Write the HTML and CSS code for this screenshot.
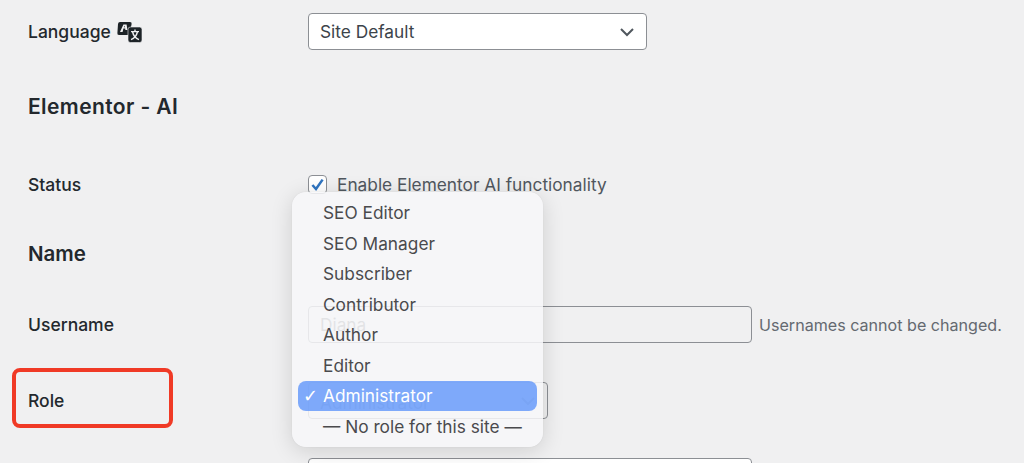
FILE: index.html
```html
<!DOCTYPE html>
<html lang="en">
<head>
<meta charset="utf-8">
<title>Profile</title>
<link rel="stylesheet" href="styles.css">
</head>
<body>
<main class="form">
  <div class="row row-language">
    <div class="label label-icon">Language
      <svg class="lang-icon" width="26" height="22" viewBox="0 0 26 22" aria-hidden="true">
        <path d="M3 1 H13 Q15 1 14.6 3 L12.8 12 Q12.4 14 10.4 14 H2 Q0 14 0.4 12 L1 3 Q1.2 1 3 1 Z" fill="#1d2327"/>
        <path d="M3 11 L6.4 3.4 H9.6 L10.4 9 H8.4 L8.2 7.6 H6.4 L5.6 11 Z M6.9 6.2 H8.1 L7.9 4.8 Z" fill="#f0f0f1" fill-rule="evenodd"/>
        <rect x="11" y="6" width="14" height="15.5" rx="2.5" fill="#1d2327" stroke="#f0f0f1" stroke-width="0.6"/>
        <path d="M18 8.4 V10.4 M14 10.6 H22 M15.6 11 C16.4 14.6 18.8 17.4 22 18.6 M20.4 11 C19.6 14.6 17.2 17.4 14 18.6" fill="none" stroke="#f0f0f1" stroke-width="1.4"/>
      </svg>
    </div>
    <div class="select select-wide"><span>Site Default</span><svg class="chevron" width="16" height="10" viewBox="0 0 16 10" aria-hidden="true"><path d="M2 2 L8 8 L14 2" fill="none" stroke="#50575e" stroke-width="2"/></svg></div>
  </div>

  <h2 class="heading heading-ai">Elementor - AI</h2>

  <div class="row row-status">
    <div class="label">Status</div>
    <div class="check-line">
      <span class="checkbox"><svg width="17" height="17" viewBox="0 0 17 17" aria-hidden="true"><path d="M3.4 9 L7 13 L13.6 3.6" fill="none" stroke="#2f74c0" stroke-width="2.5"/></svg></span>
      <span class="check-text">Enable Elementor AI functionality</span>
    </div>
  </div>

  <h2 class="heading heading-name">Name</h2>

  <div class="row row-username">
    <div class="label">Username</div>
    <div class="field-line">
      <div class="input input-disabled">Diana</div>
      <span class="hint">Usernames cannot be changed.</span>
    </div>
  </div>

  <div class="row row-role">
    <div class="label">Role</div>
    <div class="select select-role"><span>Administrator</span><svg class="chevron" width="16" height="10" viewBox="0 0 16 10" aria-hidden="true"><path d="M2 2 L8 8 L14 2" fill="none" stroke="#50575e" stroke-width="2"/></svg></div>
  </div>

  <div class="row row-next">
    <div class="label"></div>
    <div class="input input-next"></div>
  </div>
</main>

<div class="highlight-box"></div>

<ul class="menu">
  <li class="menu-item">SEO Editor</li>
  <li class="menu-item">SEO Manager</li>
  <li class="menu-item">Subscriber</li>
  <li class="menu-item">Contributor</li>
  <li class="menu-item">Author</li>
  <li class="menu-item">Editor</li>
  <li class="menu-item menu-item-active"><span class="tick">✓</span>Administrator</li>
  <li class="menu-item">— No role for this site —</li>
</ul>
</body>
</html>
```
FILE: styles.css
```css
* { box-sizing: border-box; }
html, body { margin: 0; height: 100%; overflow: hidden; }
body {
  background: #f0f0f1;
  color: #1d2327;
  font-family: Inter, "Liberation Sans", sans-serif;
  font-size: 17.3px;
  position: relative;
}
.form { height: 100vh; overflow: hidden; padding: 13px 0 0 28px; }
.row {
  display: grid;
  grid-template-columns: 280px 1fr;
  align-items: center;
}
.label { font-weight: 500; color: #23282d; font-size: 17.5px; }
.label-icon { display: flex; align-items: center; gap: 6px; }
.lang-icon { margin-top: 1px; }
.heading {
  margin: 0;
  font-size: 20.5px;
  font-weight: 600;
  line-height: 30px;
  color: #23282d;
}
.heading-ai { margin-top: 42px; font-size: 21px; letter-spacing: 0.4px; }
.row-status { margin-top: 50px; height: 24px; }
.heading-name { margin-top: 43px; }
.row-username { margin-top: 37px; }
.row-role { margin-top: 39px; }
.row-next { margin-top: 39px; }

.select, .input {
  height: 37px;
  border: 1px solid #8c8f94;
  border-radius: 4px;
  background: #fff;
  color: #3c434a;
  display: flex;
  align-items: center;
  padding: 0 11px;
}
.select { justify-content: space-between; }
.select-wide { width: 339px; }
.select-role { width: 240px; background: #f0f0f1; }
.select-role span { padding-top: 3px; }
.chevron { flex: none; }
.input { width: 444px; }
.input-disabled { background: #f0f0f1; color: #6f7276; flex: none; }
.input-next { height: 37px; }

.check-line { display: flex; align-items: center; gap: 10px; }
.checkbox {
  width: 19px;
  height: 19px;
  border: 1px solid #8c8f94;
  border-radius: 4px;
  background: #fff;
  display: flex;
  align-items: center;
  justify-content: center;
  flex: none;
}
.check-text { color: #50575e; }
.field-line { display: flex; align-items: center; gap: 7px; }
.hint { color: #646970; font-size: 16.1px; white-space: nowrap; }

.highlight-box {
  position: absolute;
  left: 12px;
  top: 368px;
  width: 161px;
  height: 60px;
  border: 4px solid #f03a26;
  border-radius: 8px;
}
.menu {
  position: absolute;
  left: 292px;
  top: 192px;
  width: 251px;
  height: 255px;
  margin: 0;
  padding: 5px 6px 0;
  list-style: none;
  border-radius: 14px;
  background: rgba(247, 247, 249, 0.85);
  box-shadow: 0 0 1px rgba(0, 0, 0, 0.15), 0 4px 22px rgba(0, 0, 0, 0.14);
}
.menu-item {
  height: 30.6px;
  line-height: 32.6px;
  padding-left: 25px;
  border-radius: 8px;
  color: #4a4a4d;
  font-size: 17.3px;
  position: relative;
  white-space: nowrap;
}
.menu-item-active {
  line-height: 30.6px;
  background: rgba(92, 148, 250, 0.78);
  color: #fff;
}
.tick {
  position: absolute;
  left: 5px;
  top: 0;
  font-family: "DejaVu Sans", sans-serif;
  font-size: 18px;
  font-weight: 700;
}
```
